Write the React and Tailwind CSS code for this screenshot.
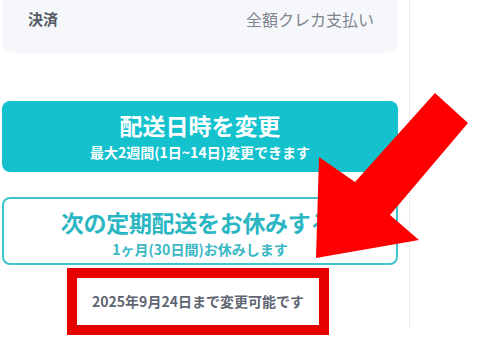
export default function App() {
  const font = { fontFamily: '"Noto Sans CJK JP", "Noto Sans", sans-serif' };

  return (
    <div className="relative w-[477px] h-[350px] overflow-hidden bg-white" style={font}>
      <div className="w-[410px] h-[327px] border-r border-dotted border-[#d5dae6] pl-[2px] pr-[11px]">
        {/* 支払い情報カード */}
        <div className="h-[53px] rounded-b-xl bg-[#f6f7fb] pt-[8px] pl-[26px] pr-[24px] flex justify-between">
          <span className="text-[15px] leading-[22px] font-bold text-[#555b66]">決済</span>
          <span className="text-[16px] leading-[22px] text-[#80858f]">全額クレカ支払い</span>
        </div>

        <button className="mt-[48px] w-[396px] h-[71px] rounded-lg bg-[#14c2ce] flex flex-col items-center text-white">
          <span className="mt-[8px] text-[23px] leading-[32px] font-bold">配送日時を変更</span>
          <span className="mt-[2px] text-[14px] leading-[18px] font-bold">最大2週間(1日~14日)変更できます</span>
        </button>

        <button className="mt-[25px] w-[396px] h-[68px] rounded-lg border-2 border-[#3cc4cf] bg-white flex flex-col items-center">
          <span className="mt-[7px] pr-[6px] text-[23px] leading-[32px] font-bold tracking-[-0.3px] text-[#2bb6c3]">次の定期配送をお休みする</span>
          <span className="mt-[2px] text-[14px] leading-[18px] font-bold text-[#3ab7c3]">1ヶ月(30日間)お休みします</span>
        </button>

        <div className="mt-[3px] ml-[65px] w-[262px] h-[67px] border-[10px] border-[#e60000] flex items-center justify-center">
          <span className="text-[14px] font-bold text-[#5f6571]">2025年9月24日まで変更可能です</span>
        </div>
      </div>

      {/* 赤い矢印 */}
      <svg className="absolute left-0 top-0" width="477" height="350" viewBox="0 0 477 350">
        <polygon
          points="435,93 468,123 390,215 419,240 316,258 319,157 355,182"
          fill="#ff0000"
        />
      </svg>
    </div>
  );
}
